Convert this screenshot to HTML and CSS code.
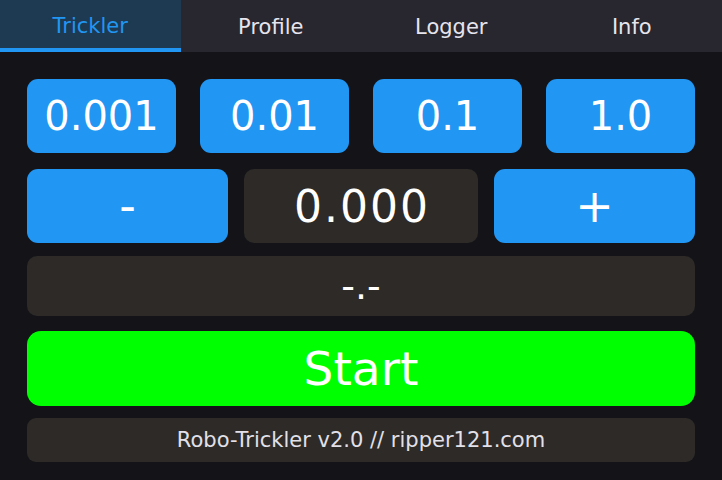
FILE: index.html
```html
<!DOCTYPE html>
<html>
<head>
<meta charset="utf-8">
<link rel="stylesheet" href="styles.css">
</head>
<body>
<div class="screen">
  <nav class="tabs">
    <div class="tab active">Trickler</div>
    <div class="tab">Profile</div>
    <div class="tab">Logger</div>
    <div class="tab">Info</div>
  </nav>
  <main class="content">
    <div class="row steps">
      <div class="btn">0.001</div>
      <div class="btn">0.01</div>
      <div class="btn">0.1</div>
      <div class="btn">1.0</div>
    </div>
    <div class="row adjust">
      <div class="btn sign">-</div>
      <div class="panel value">0.000</div>
      <div class="btn sign">+</div>
    </div>
    <div class="panel weight">-.-</div>
    <div class="start">Start</div>
    <div class="panel footer">Robo-Trickler v2.0 // ripper121.com</div>
  </main>
</div>
</body>
</html>
```
FILE: styles.css
```css
* { box-sizing: border-box; }
html, body { margin: 0; padding: 0; }
body {
  width: 722px;
  height: 480px;
  background: #131318;
  font-family: "DejaVu Sans", sans-serif;
  color: #ffffff;
  overflow: hidden;
}
.screen { display: flex; flex-direction: column; height: 480px; }
.tabs {
  display: grid;
  grid-template-columns: repeat(4, 1fr);
  height: 52px;
  background: #28262e;
}
.tab {
  display: flex;
  align-items: center;
  justify-content: center;
  font-size: 21px;
  color: #e6e4ec;
  padding-top: 2px;
}
.tab.active {
  background: #1d3a52;
  color: #2196f3;
  border-bottom: 4px solid #2196f3;
  padding-top: 4px;
}
.content {
  padding: 27px 27px 0 27px;
  display: flex;
  flex-direction: column;
}
.row { display: flex; }
.steps { gap: 24px; height: 74px; }
.steps .btn { flex: 1; }
.adjust { gap: 16px; height: 74px; margin-top: 16px; }
.adjust .sign { width: 201px; }
.adjust .value { flex: 1; }
.btn {
  background: #2196f3;
  border-radius: 11px;
  display: flex;
  align-items: center;
  justify-content: center;
  font-size: 40px;
  color: #fff;
}
.sign { font-size: 46px; }
.panel {
  background: #2d2a27;
  border-radius: 10px;
  display: flex;
  align-items: center;
  justify-content: center;
  font-size: 40px;
  color: #fff;
}
.value { font-size: 44px; letter-spacing: 2px; padding-left: 2px; }
.weight { height: 60px; margin-top: 13px; font-size: 38px; }
.start {
  height: 75px;
  margin-top: 15px;
  background: #00ff00;
  border-radius: 14px;
  display: flex;
  align-items: center;
  justify-content: center;
  font-size: 47px;
  color: #fff;
}
.footer { height: 44px; margin-top: 12px; font-size: 21px; color: #e2e0e8; border-radius: 9px; }
```
